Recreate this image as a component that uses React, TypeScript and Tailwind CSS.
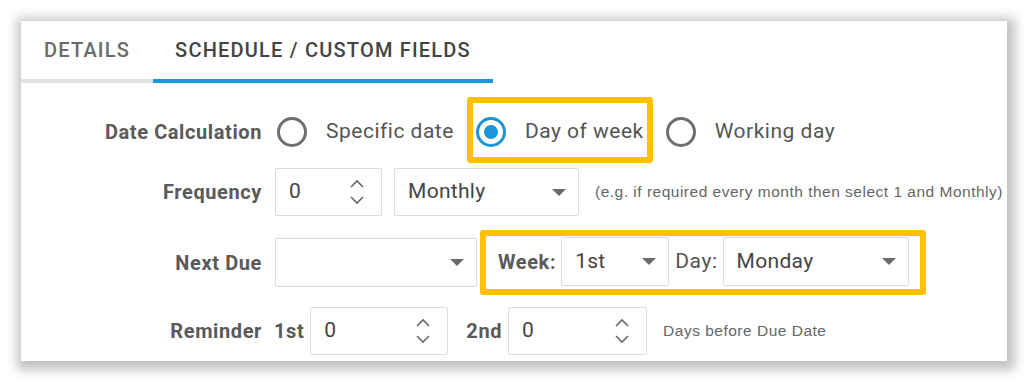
import React from 'react';

const roboto = { fontFamily: 'Roboto, "Liberation Sans", sans-serif' };
const arial = { fontFamily: '"Liberation Sans", Arial, sans-serif' };

const Chevrons: React.FC = () => (
  <svg width="14" height="26" viewBox="0 0 14 26" fill="none" stroke="#6a6a6a" strokeWidth="1.6">
    <path d="M1 8 L7 2 L13 8" />
    <path d="M1 18 L7 24 L13 18" />
  </svg>
);

const Caret: React.FC = () => (
  <svg width="14" height="7" viewBox="0 0 14 7" className="shrink-0">
    <path d="M0 0 H14 L7 7 Z" fill="#6a6a6a" />
  </svg>
);

const NumberBox: React.FC<{ value: string; width: string }> = ({ value, width }) => (
  <div className={`flex h-[48px] ${width} items-center justify-between rounded-[2px] border border-[#dcdcdc] bg-white pl-[13px] pr-[17px] text-[21px] tracking-[0.3px] text-[#444]`}>
    <span>{value}</span>
    <Chevrons />
  </div>
);

const Select: React.FC<{ value?: string; width: string; height?: string }> = ({ value = '', width, height = 'h-[49px]' }) => (
  <div className={`flex ${height} ${width} items-center justify-between rounded-[2px] border border-[#dcdcdc] bg-white pl-[13px] pr-[12px] text-[21px] tracking-[0.3px] text-[#444]`}>
    <span>{value}</span>
    <Caret />
  </div>
);

const Radio: React.FC<{ label: string; checked?: boolean; highlight?: boolean }> = ({ label, checked = false, highlight = false }) => (
  <div className="relative flex h-[30px] items-center">
    {highlight && (
      <span className="pointer-events-none absolute -left-[9px] -right-[9px] -top-[20px] -bottom-[16px] rounded-[3px] border-[6px] border-[#ffc000]" />
    )}
    <span
      className={`flex h-[30px] w-[30px] items-center justify-center rounded-full border-[3px] ${
        checked ? 'border-[#1b95d8]' : 'border-[#6e6e6e]'
      }`}
    >
      {checked && <span className="h-[14px] w-[14px] rounded-full bg-[#1b95d8]" />}
    </span>
    <span className="ml-[19px] text-[21px] tracking-[0.5px] text-[#555]">{label}</span>
  </div>
);

const label = 'text-[20px] font-bold tracking-[0.6px] text-[#5a5a5a]';

export default function App() {
  return (
    <div className="min-h-[382px] bg-white pl-[21px] pt-[21px]" style={roboto}>
      <div className="h-[340px] w-[986px] bg-white shadow-[2px_3px_10px_6px_rgba(0,0,0,0.24)]">
        {/* tabs */}
        <div className="flex">
          <div className="flex h-[62px] w-[132px] items-center justify-center border-b-4 border-[#e2e2e2] text-[20px] font-medium tracking-[1.2px] text-[#6a6a6a]">
            DETAILS
          </div>
          <div className="flex h-[62px] w-[340px] items-center justify-center border-b-4 border-[#1996d8] text-[20px] font-medium tracking-[1.2px] text-[#444]">
            SCHEDULE / CUSTOM FIELDS
          </div>
        </div>

        {/* Date Calculation */}
        <div className="mt-[34px] flex h-[30px] items-center">
          <div className={`w-[241px] text-right ${label} text-[#4a4a4a]`}>Date Calculation</div>
          <div className="ml-[15px] flex items-center gap-[22px]">
            <Radio label="Specific date" />
            <Radio label="Day of week" checked highlight />
            <Radio label="Working day" />
          </div>
        </div>

        {/* Frequency */}
        <div className="mt-[21px] flex h-[48px] items-center">
          <div className={`w-[241px] text-right ${label}`}>Frequency</div>
          <div className="ml-[13px] flex items-center">
            <NumberBox value="0" width="w-[107px]" />
            <div className="ml-[12px]">
              <Select value="Monthly" width="w-[185px]" height="h-[48px]" />
            </div>
            <span className="ml-[16px] whitespace-nowrap text-[15.5px] tracking-[0.5px] text-[#666]" style={arial}>
              (e.g. if required every month then select 1 and Monthly)
            </span>
          </div>
        </div>

        {/* Next Due */}
        <div className="mt-[14px] flex h-[65px] items-center">
          <div className={`w-[241px] text-right ${label}`}>Next Due</div>
          <div className="ml-[13px] flex items-center">
            <Select width="w-[202px]" />
            <div className="ml-[3px] flex items-center rounded-[3px] border-[6px] border-[#ffc000] pb-[3px] pl-[12px] pr-[11px] pt-px">
              <span className={label}>Week:</span>
              <div className="ml-[5px]">
                <Select value="1st" width="w-[108px]" />
              </div>
              <span className="ml-[6px] text-[21px] tracking-[0.6px] text-[#555]">Day:</span>
              <div className="ml-[5px]">
                <Select value="Monday" width="w-[186px]" />
              </div>
            </div>
          </div>
        </div>

        {/* Reminder */}
        <div className="mt-[12px] flex h-[48px] items-center">
          <div className={`w-[241px] text-right ${label}`}>Reminder</div>
          <div className="ml-[12px] flex items-center">
            <span className={label}>1st</span>
            <div className="ml-[6px]">
              <NumberBox value="0" width="w-[138px]" />
            </div>
            <span className={`ml-[18px] ${label}`}>2nd</span>
            <div className="ml-[6px]">
              <NumberBox value="0" width="w-[139px]" />
            </div>
            <span className="ml-[16px] whitespace-nowrap text-[15.5px] tracking-[0.5px] text-[#666]" style={arial}>
              Days before Due Date
            </span>
          </div>
        </div>
      </div>
    </div>
  );
}
